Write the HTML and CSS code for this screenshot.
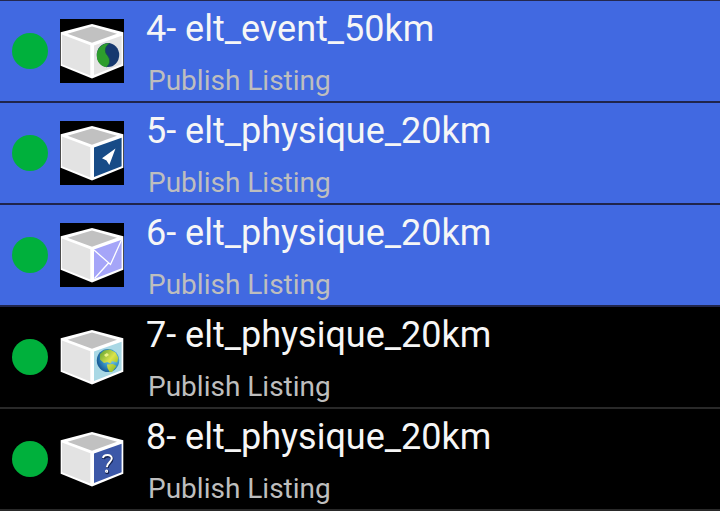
FILE: index.html
```
<!DOCTYPE html>
<html lang="en">
<head>
<meta charset="utf-8">
<title>Listings</title>
<link rel="stylesheet" href="styles.css">
</head>
<body>
<svg class="defs" aria-hidden="true">
  <defs>
    <g id="cube">
      <path d="M32 5 63.3 13.3V46.7L32 59.5 .7 46.7V13.3Z" fill="#fff"/>
      <path d="M32 7.4 57 14.7 32 23.8 7.5 14.7Z" fill="#c1c1c1"/>
      <path d="M2 15.5 30.3 26.3V56.4L2 45.3Z" fill="#e3e3e3"/>
    </g>
    <path id="face" d="M34 26.5 61.6 16.8V45.3L34 56Z"/>
    <radialGradient id="sea" cx=".65" cy=".4" r=".65">
      <stop offset="0" stop-color="#9edbed"/><stop offset=".55" stop-color="#3b9acb"/><stop offset="1" stop-color="#175a96"/>
    </radialGradient>
    <linearGradient id="land" x1="0" y1="0" x2="1" y2="1">
      <stop offset="0" stop-color="#579f32"/><stop offset=".5" stop-color="#dce34b"/><stop offset="1" stop-color="#76ac16"/>
    </linearGradient>
  </defs>
</svg>
<main class="list">
  <article class="row selected">
    <span class="status"></span>
    <svg class="icon" viewBox="0 0 64 64">
      <use href="#cube"/><use href="#face" fill="#e3e3e3"/>
      <ellipse cx="48" cy="36" rx="11.2" ry="12" fill="#17396f"/>
      <path d="M50 24.2C42 23.5 36.8 29.5 36.8 36.2 36.8 43 41 47.8 46.5 48 50.5 45 50.5 40 47.5 36.5 43.5 32 45.5 26.5 50 24.2Z" fill="#2d9d2c"/>
      <path d="M50 24.2C45.5 26.5 43.5 32 47.5 36.5 50.5 40 50.5 45 46.5 48" fill="none" stroke="#174f50" stroke-width=".8"/>
    </svg>
    <div class="text"><h2 class="title">4- elt_event_50km</h2><p class="subtitle">Publish Listing</p></div>
  </article>
  <article class="row selected">
    <span class="status"></span>
    <svg class="icon" viewBox="0 0 64 64">
      <use href="#cube"/><use href="#face" fill="#174b87"/>
      <path d="M55.5 27.5 42 37.2 46.5 39.5 49.3 44Z" fill="#fff"/>
    </svg>
    <div class="text"><h2 class="title">5- elt_physique_20km</h2><p class="subtitle">Publish Listing</p></div>
  </article>
  <article class="row selected">
    <span class="status"></span>
    <svg class="icon" viewBox="0 0 64 64">
      <use href="#cube"/><use href="#face" fill="#a5a5f8"/>
      <path d="M34 27 50.5 41.5 61.5 17M34.5 55.5 48.5 40" fill="none" stroke="#fff" stroke-width="1.3"/>
    </svg>
    <div class="text"><h2 class="title">6- elt_physique_20km</h2><p class="subtitle">Publish Listing</p></div>
  </article>
  <article class="row">
    <span class="status"></span>
    <svg class="icon" viewBox="0 0 64 64">
      <use href="#cube"/><use href="#face" fill="#a9d8e5"/>
      <ellipse cx="48" cy="35.5" rx="11.2" ry="11.5" fill="url(#sea)"/>
      <path d="M40 29 44 25.5 50 24.5 55.5 27.5 58.5 33 57 37.5 52 36 50.5 38.5 47.5 37 44 38 40 34.5ZM47 39.5 53 39 56.5 41 52 47 49.5 46.8 47.5 43Z" fill="url(#land)"/>
      <path d="M44 30 47 28 49 30 46 32Z" fill="#eef48b"/>
    </svg>
    <div class="text"><h2 class="title">7- elt_physique_20km</h2><p class="subtitle">Publish Listing</p></div>
  </article>
  <article class="row">
    <span class="status"></span>
    <svg class="icon" viewBox="0 0 64 64">
      <use href="#cube"/><use href="#face" fill="#3c58a8"/>
      <g class="question-shadow"><path d="M43.5 32C44 28.5 52 27.5 52 32 52 36 47.3 36 47.3 41"/><circle cx="47.2" cy="45.2" r=".6"/></g>
      <g class="question"><path d="M43 31C43.5 27.3 51.8 26.8 51.8 31.3 51.8 35 46.8 35.5 46.8 40.3"/><circle cx="46.6" cy="44.2" r=".6"/></g>
    </svg>
    <div class="text"><h2 class="title">8- elt_physique_20km</h2><p class="subtitle">Publish Listing</p></div>
  </article>
</main>
</body>
</html>
```
FILE: styles.css
```
* { box-sizing: border-box; }
body { margin: 0; background: #000; font-family: Roboto, "Liberation Sans", sans-serif; }
.defs { position: absolute; width: 0; height: 0; }
.list { border-top: 1px solid #24284e; }
.row { display: flex; align-items: flex-start; height: 102px; padding-left: 12px; border-bottom: 2px solid #292929; }
.selected { background: #4169e1; border-bottom-color: #20254b; }
.status { flex: none; width: 36px; height: 36px; margin-top: 32px; border-radius: 50%; background: #00b03c; }
.icon { flex: none; width: 64px; height: 64px; margin: 18px 0 0 12px; background: #000; }
.text { padding: 6px 0 0 22px; white-space: nowrap; }
.title { margin: 0; font-size: 36px; line-height: 44px; font-weight: 400; color: #f6f6f6; }
.subtitle { margin: 13px 0 0 2px; font-size: 28px; line-height: 34px; color: #bebebe; }
.question, .question-shadow { fill: none; stroke: #fff; stroke-width: 2; }
.question-shadow { stroke: #14224e; stroke-width: 3; }
```
